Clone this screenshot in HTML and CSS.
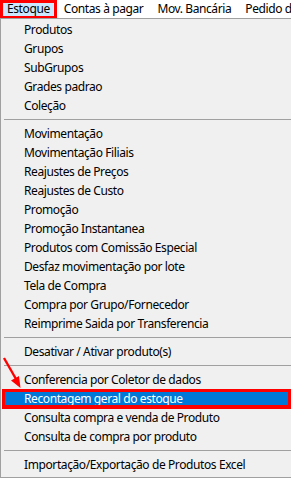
FILE: index.html
```html
<!DOCTYPE html>
<html lang="pt-BR">
<head>
<meta charset="utf-8">
<title>Estoque</title>
<link rel="stylesheet" href="styles.css">
</head>
<body>
<div class="menubar">
  <div class="menubar-item active">Estoque</div>
  <div class="menubar-item">Contas à pagar</div>
  <div class="menubar-item">Mov. Bancária</div>
  <div class="menubar-item">Pedido de Venda</div>
</div>
<div class="dropdown">
  <div class="item">Produtos</div>
  <div class="item">Grupos</div>
  <div class="item">SubGrupos</div>
  <div class="item">Grades padrao</div>
  <div class="item">Coleção</div>
  <div class="sep"></div>
  <div class="item">Movimentação</div>
  <div class="item">Movimentação Filiais</div>
  <div class="item">Reajustes de Preços</div>
  <div class="item">Reajustes de Custo</div>
  <div class="item">Promoção</div>
  <div class="item">Promoção Instantanea</div>
  <div class="item">Produtos com Comissão Especial</div>
  <div class="item">Desfaz movimentação por lote</div>
  <div class="item">Tela de Compra</div>
  <div class="item">Compra por Grupo/Fornecedor</div>
  <div class="item">Reimprime Saida por Transferencia</div>
  <div class="sep"></div>
  <div class="item">Desativar / Ativar produto(s)</div>
  <div class="sep"></div>
  <div class="item">Conferencia por Coletor de dados</div>
  <div class="item selected">Recontagem geral do estoque</div>
  <div class="item">Consulta compra e venda de Produto</div>
  <div class="item">Consulta de compra por produto</div>
  <div class="sep"></div>
  <div class="item">Importação/Exportação de Produtos Excel</div>
  <svg class="arrow" width="24" height="34" viewBox="0 0 24 34">
    <line x1="3" y1="2" x2="15" y2="23" stroke="#ff0000" stroke-width="2.4"/>
    <polygon points="19.5,32 10,24.5 18,20" fill="#ff0000"/>
  </svg>
</div>
</body>
</html>
```

FILE: styles.css
```css
html, body {
  margin: 0;
  padding: 0;
  overflow: hidden;
  background: #ffffff;
}
body {
  width: 291px;
  height: 478px;
  font-family: "Noto Sans", "Open Sans", sans-serif;
  font-size: 12px;
  letter-spacing: -0.4px;
  color: #000;
}
.menubar {
  display: flex;
  height: 18px;
  background: #ffffff;
  white-space: nowrap;
  overflow: hidden;
}
.menubar-item {
  padding: 0 7px;
  line-height: 18px;
  height: 18px;
  flex-shrink: 0;
}
.menubar-item.active {
  background: #cce8ff;
  height: 19px;
  outline: 3px solid #ff0000;
  outline-offset: -3px;
  position: relative;
  z-index: 1;
}
.dropdown {
  position: relative;
  width: 294px;
  box-sizing: border-box;
  height: 460px;
  background: #f0f0f0;
  border: 1px solid #a0a0a0;
  padding: 1px 0 3px 0;
}
.item {
  height: 19px;
  line-height: 19px;
  margin: 0 2px 0 1px;
  padding-left: 22px;
  white-space: nowrap;
}
.item.selected {
  background: #0078d7;
  color: #ffffff;
  outline: 3px solid #ff0000;
  outline-offset: -3px;
  box-shadow: 0 1px 0 #ff0000;
}
.sep {
  height: 9px;
  margin: 0 2px 0 3px;
  display: flex;
  align-items: center;
}
.sep::before {
  content: "";
  flex: 1;
  height: 1px;
  background: #a0a0a0;
}
.arrow {
  position: absolute;
  left: 0;
  top: 337px;
}
```
